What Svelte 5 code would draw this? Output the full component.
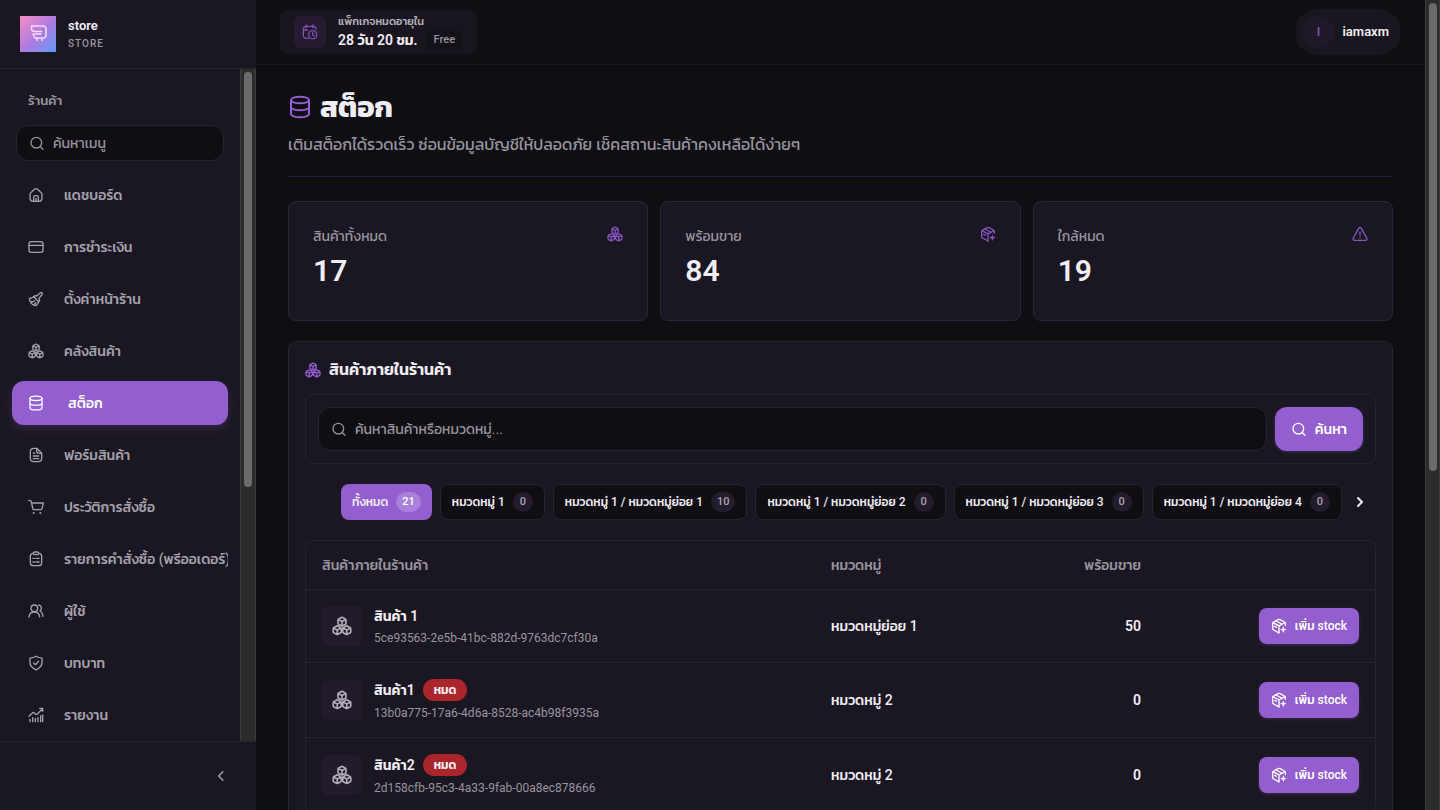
<script lang="ts">
	interface NavItem {
		icon: string;
		label: string;
		active?: boolean;
	}

	const navItems: NavItem[] = [
		{ icon: 'home', label: 'แดชบอร์ด' },
		{ icon: 'card', label: 'การชำระเงิน' },
		{ icon: 'brush', label: 'ตั้งค่าหน้าร้าน' },
		{ icon: 'boxes', label: 'คลังสินค้า' },
		{ icon: 'database', label: 'สต็อก', active: true },
		{ icon: 'file', label: 'ฟอร์มสินค้า' },
		{ icon: 'cart', label: 'ประวัติการสั่งซื้อ' },
		{ icon: 'clipboard', label: 'รายการคำสั่งซื้อ (พรีออเดอร์)' },
		{ icon: 'users', label: 'ผู้ใช้' },
		{ icon: 'shield', label: 'บทบาท' },
		{ icon: 'chart', label: 'รายงาน' }
	];

	const stats = [
		{ label: 'สินค้าทั้งหมด', value: 17, icon: 'boxes' },
		{ label: 'พร้อมขาย', value: 84, icon: 'package' },
		{ label: 'ใกล้หมด', value: 19, icon: 'alert' }
	];

	const categories = [
		{ label: 'ทั้งหมด', count: 21 },
		{ label: 'หมวดหมู่ 1', count: 0 },
		{ label: 'หมวดหมู่ 1 / หมวดหมู่ย่อย 1', count: 10 },
		{ label: 'หมวดหมู่ 1 / หมวดหมู่ย่อย 2', count: 0 },
		{ label: 'หมวดหมู่ 1 / หมวดหมู่ย่อย 3', count: 0 },
		{ label: 'หมวดหมู่ 1 / หมวดหมู่ย่อย 4', count: 0 }
	];

	const products = [
		{ name: 'สินค้า 1', id: '5ce93563-2e5b-41bc-882d-9763dc7cf30a', category: 'หมวดหมู่ย่อย 1', stock: 50 },
		{ name: 'สินค้า1', id: '13b0a775-17a6-4d6a-8528-ac4b98f3935a', category: 'หมวดหมู่ 2', stock: 0 },
		{ name: 'สินค้า2', id: '2d158cfb-95c3-4a33-9fab-00a8ec878666', category: 'หมวดหมู่ 2', stock: 0 }
	];

	let selected = $state(0);
	let menuQuery = $state('');
	let productQuery = $state('');
</script>

{#snippet icon(name: string)}
	<svg class="icon" viewBox="0 0 24 24" aria-hidden="true">
		{#if name === 'home'}
			<path d="M3 11.5c0-1.6.5-2.6 1.8-3.7l4.6-4.2c1.6-1.4 3.6-1.4 5.2 0l4.6 4.2c1.3 1.1 1.8 2.1 1.8 3.7V17c0 3-1.5 4.5-4.5 4.500h-9C4.500 21.500 3 20 3 17z" />
			<path d="M8.500 21v-5.500c0-1.500.8-2.500 2.200-2.500h2.600c1.400 0 2.200 1 2.200 2.500V21M12 17v4" />
		{:else if name === 'card'}
			<rect x="1.500" y="4" width="21" height="16" rx="3.500" />
			<path d="M1.500 9.500h21" />
		{:else if name === 'brush'}
			<path d="M13 7.500 18.500 2.700c1-.8 1.800-.8 2.500 0s.7 1.600 0 2.500L16.500 11c1.500 2 1 3.800-.5 5.200L8.500 8.700C10 7.200 11.500 6.500 13 7.500z" />
			<path d="M8.500 8.700C6.500 10.500 4.500 11 2 11.200c.3 5.500 4.200 10.300 9.800 10.800 2.200-1.500 3.800-3.500 4.200-5.800M5 16c2 .3 3.700-.2 5-1.500M9 20c1.300-.6 2.200-1.500 3-2.600" />
		{:else if name === 'boxes'}
			<path d="m12 1.500 3.800 2c.7.400 1 .8 1 1.500v3.600c0 .7-.3 1.200-1 1.500L12 12l-3.800-1.900c-.7-.3-1-.8-1-1.500V5c0-.7.300-1.100 1-1.500zM7.500 4.300 12 6.600l4.500-2.300M12 6.600V12" />
			<path d="m6.300 11.700 3.800 2c.7.400 1 .8 1 1.500v3.600c0 .7-.3 1.200-1 1.500l-3.800 1.900-3.800-1.900c-.7-.3-1-.8-1-1.500v-3.600c0-.7.300-1.100 1-1.500zM1.800 14.500l4.500 2.300 4.500-2.300M6.300 16.800v5.400" />
			<path d="m17.700 11.700 3.800 2c.7.400 1 .8 1 1.500v3.600c0 .7-.3 1.200-1 1.500l-3.800 1.900-3.800-1.900c-.7-.3-1-.8-1-1.500v-3.600c0-.7.300-1.100 1-1.500zM13.200 14.500l4.500 2.300 4.500-2.300M17.700 16.800v5.400" />
		{:else if name === 'database'}
			<ellipse cx="12" cy="5" rx="9" ry="3.300" />
			<path d="M3 5v7c0 1.800 4 3.300 9 3.300s9-1.500 9-3.300V5M3 12v7c0 1.800 4 3.300 9 3.300s9-1.500 9-3.300v-7" />
		{:else if name === 'file'}
			<path d="M13 2H9C5 2 3.500 3.500 3.500 7v10c0 3.500 1.500 5 5 5h7c3.500 0 5-1.500 5-5V9.500z" />
			<path d="M13 2v4c0 2.500 1 3.500 3.500 3.500h4M8 9h2M8 13.500h8M8 17.500h8" />
		{:else if name === 'cart'}
			<path d="M1 2h1.500c1.200 0 1.900.7 2.200 1.800L7.200 14c.3 1.400 1 2 2.400 2H20M5.500 6H23l-2 8.500c-.3 1-.8 1.500-1.800 1.500H8" />
			<circle class="dot" cx="8.500" cy="21" r="1.500" />
			<circle class="dot" cx="18.500" cy="21" r="1.500" />
		{:else if name === 'clipboard'}
			<path d="M8 3.500C4.700 3.500 3.500 4.800 3.500 8v9.500c0 3.200 1.500 4.500 4.500 4.500h8c3 0 4.500-1.300 4.500-4.500V8c0-3.200-1.200-4.500-4.500-4.500" />
			<rect x="8" y="1.500" width="8" height="4" rx="2" />
			<path d="M7.500 11h2M12 11h4.500M7.500 16.500h2M12 16.500h4.500" />
		{:else if name === 'users'}
			<circle cx="9.500" cy="8" r="5" />
			<path d="M1.500 21c.5-4.600 3.500-7.500 8-7.500s7.500 2.900 8 7.500M16 3c4.500.5 5.500 6.500 2 9 2.600 1.500 4 4.500 4.500 8" />
		{:else if name === 'shield'}
			<path d="M12 1.800c3 1.900 5.600 2.600 9 2.800v7.200c0 5-3.500 8-9 10.400C6.500 19.800 3 16.800 3 11.800V4.600c3.400-.2 6-.9 9-2.800z" />
			<path d="m8.500 12 2.500 2.500 5-5" />
		{:else if name === 'chart'}
			<path d="m1.500 14 5-5c1-1 2-1 3 0l1.500 1.500c1 1 2 1 3 0L22 2.500M17.500 2H22v4.500" />
			<path d="M3 18.500V22M7 16v6M11 17v5M15 16v6M19 13v9M22 12v10" />
		{:else if name === 'package'}
			<path d="M21.500 11V8.200c0-1.100-.5-1.700-1.400-2.200l-6.500-3.500c-1.100-.6-2.100-.6-3.200 0L4 6c-1 .5-1.500 1.100-1.500 2.200v7.600c0 1.100.5 1.700 1.500 2.200l8 4.200" />
			<path d="m3 7 9 4.700L21 7M7.500 4.500l9.200 4.900M12 11.700v10.500M5.500 12.500l2.500 1.300" />
			<path class="dot" d="m18.500 12.500 1.400 3.600 3.600 1.400-3.600 1.400-1.400 3.600-1.400-3.600-3.600-1.400 3.600-1.400z" />
		{:else if name === 'alert'}
			<path d="M10 3.500 2 18c-.9 1.900 0 3.500 2 3.500h16c2 0 2.900-1.600 2-3.500L14 3.500c-1-1.700-3-1.700-4 0zM12 9v5M12 17.500v.2" />
		{:else if name === 'calendar'}
			<path d="M6.500 1.500v4M16.500 1.500v4M10 21.500H7c-3.500 0-5-1.500-5-5V8.500c0-3.500 1.500-5 5-5h9c3.500 0 5 1.500 5 4.500M2 9h6" />
			<circle cx="16" cy="16" r="6" />
			<path d="M16 13v3.300l2 1.200" />
		{:else if name === 'search'}
			<circle cx="11" cy="11.500" r="8" />
			<path d="m17 17.500 4 4" />
		{:else if name === 'left'}
			<path d="m15 5-7 7 7 7" />
		{:else if name === 'right'}
			<path d="m9 6 6 6-6 6" />
		{/if}
	</svg>
{/snippet}

<div class="app">
	<aside class="sidebar">
		<header class="brand">
			<svg class="logo" viewBox="0 0 36 36" aria-hidden="true">
				<defs>
					<linearGradient id="logo-fill" x1="0" y1="0" x2="1" y2="1">
						<stop offset="0" stop-color="#f48fc2" />
						<stop offset="0.5" stop-color="#b37be0" />
						<stop offset="1" stop-color="#5f9bf5" />
					</linearGradient>
				</defs>
				<rect width="36" height="36" fill="url(#logo-fill)" />
				<path class="logo-line" d="M11.500 10h11.500c2 0 3 1 3 3v6c0 2-1 3-3 3h-8l-2-4h8M14 15.500h7.500M11.500 10v2.500c0 1.800.8 2.800 2.500 3M17 22v2.500M22 22v2.500" />
			</svg>
			<div class="brand-text">
				<strong>store</strong>
				<span>STORE</span>
			</div>
		</header>

		<div class="nav-scroll">
			<div class="nav-body">
				<p class="nav-title">ร้านค้า</p>
				<label class="menu-search">
					{@render icon('search')}
					<input type="text" placeholder="ค้นหาเมนู" aria-label="ค้นหาเมนู" bind:value={menuQuery} />
				</label>
				<nav>
					{#each navItems as item}
						<a href="#{item.icon}" class:active={item.active} aria-current={item.active ? 'page' : undefined}>
							{@render icon(item.icon)}
							<span>{item.label}</span>
						</a>
					{/each}
				</nav>
			</div>
			<div class="scrollbar nav-bar" aria-hidden="true"><i></i></div>
		</div>

		<footer class="sidebar-foot">
			<button type="button" aria-label="ย่อเมนู">{@render icon('left')}</button>
		</footer>
	</aside>

	<div class="main">
		<header class="topbar">
			<div class="plan">
				<span class="plan-icon">{@render icon('calendar')}</span>
				<div class="plan-text">
					<span class="plan-label">แพ็กเกจหมดอายุใน</span>
					<div class="plan-row">
						<strong>28 วัน 20 ชม.</strong>
						<span class="plan-tag">Free</span>
					</div>
				</div>
			</div>
			<button type="button" class="account">
				<span class="avatar">I</span>
				iamaxm
			</button>
		</header>

		<main>
			<div class="page-head">
				<h1>{@render icon('database')}สต็อก</h1>
				<p>เติมสต็อกได้รวดเร็ว ซ่อนข้อมูลบัญชีให้ปลอดภัย เช็คสถานะสินค้าคงเหลือได้ง่ายๆ</p>
			</div>

			<section class="stats">
				{#each stats as stat}
					<article class="stat">
						<div>
							<p>{stat.label}</p>
							<strong>{stat.value}</strong>
						</div>
						{@render icon(stat.icon)}
					</article>
				{/each}
			</section>

			<section class="panel">
				<h2>{@render icon('boxes')}สินค้าภายในร้านค้า</h2>

				<form class="search" onsubmit={(e) => e.preventDefault()}>
					<label class="search-field">
						{@render icon('search')}
						<input type="text" placeholder="ค้นหาสินค้าหรือหมวดหมู่..." aria-label="ค้นหาสินค้าหรือหมวดหมู่" bind:value={productQuery} />
					</label>
					<button type="submit" class="primary">{@render icon('search')}ค้นหา</button>
				</form>

				<div class="chips">
					<div class="chip-list">
						{#each categories as category, i}
							<button type="button" class="chip" class:selected={selected === i} onclick={() => (selected = i)}>
								{category.label}
								<span class="count">{category.count}</span>
							</button>
						{/each}
					</div>
					<button type="button" class="next" aria-label="ถัดไป">{@render icon('right')}</button>
				</div>

				<div class="table-wrap">
					<table>
						<thead>
							<tr>
								<th>สินค้าภายในร้านค้า</th>
								<th class="col-category">หมวดหมู่</th>
								<th class="col-stock">พร้อมขาย</th>
								<th class="col-action" aria-label="จัดการ"></th>
							</tr>
						</thead>
						<tbody>
							{#each products as product}
								<tr>
									<td>
										<div class="product">
											<span class="thumb">{@render icon('boxes')}</span>
											<div>
												<div class="name">
													{product.name}
													{#if product.stock === 0}<span class="sold-out">หมด</span>{/if}
												</div>
												<div class="id">{product.id}</div>
											</div>
										</div>
									</td>
									<td>{product.category}</td>
									<td class="col-stock">{product.stock}</td>
									<td class="col-action">
										<button type="button" class="primary small">{@render icon('package')}เพิ่ม stock</button>
									</td>
								</tr>
							{/each}
						</tbody>
					</table>
				</div>
			</section>
		</main>
	</div>

	<div class="scrollbar page-bar" aria-hidden="true"><i></i></div>
</div>

<style>
	:global(body) {
		background: #0f0e13;
	}

	.app {
		--bg: #0f0e13;
		--surface: #1b1722;
		--line: #272330;
		--text: #f0edf5;
		--muted: #98949f;
		--accent: #935fd0;
		display: flex;
		height: 100vh;
		overflow: hidden;
		background: var(--bg);
		color: var(--text);
		font-family: Roboto, Kanit, Prompt, 'Noto Sans Thai', 'Noto Sans', sans-serif;
		font-size: 14px;
		line-height: 20px;
	}

	.app *,
	.app *::before {
		box-sizing: border-box;
	}

	p,
	h1,
	h2 {
		margin: 0;
	}

	button,
	input {
		font: inherit;
		color: inherit;
		border: 0;
		background: none;
		padding: 0;
	}

	button {
		cursor: pointer;
	}

	input {
		flex: 1;
		min-width: 0;
		outline: none;
	}

	input::placeholder {
		color: var(--muted);
		opacity: 1;
	}

	.icon {
		width: 16px;
		height: 16px;
		flex: none;
		fill: none;
		stroke: currentColor;
		stroke-width: 2;
		stroke-linecap: round;
		stroke-linejoin: round;
	}

	.icon .dot {
		fill: currentColor;
		stroke: none;
	}

	/* sidebar */
	.sidebar {
		display: flex;
		flex-direction: column;
		flex: none;
		width: 256px;
		background: var(--surface);
	}

	.brand {
		display: flex;
		align-items: center;
		gap: 12px;
		height: 69px;
		padding: 0 20px;
		border-bottom: 1px solid var(--line);
	}

	.logo {
		width: 36px;
		height: 36px;
	}

	.logo-line {
		fill: none;
		stroke: #f6dcf8;
		stroke-width: 1.5;
		stroke-linecap: round;
		stroke-linejoin: round;
	}

	.brand-text {
		display: flex;
		flex-direction: column;
	}

	.brand-text strong {
		font-size: 13px;
		font-weight: 600;
	}

	.brand-text span {
		color: var(--muted);
		font-size: 10px;
		line-height: 16px;
		font-weight: 500;
		letter-spacing: 1px;
	}

	.nav-scroll {
		display: flex;
		flex: 1;
		min-height: 0;
	}

	.nav-body {
		flex: 1;
		min-width: 0;
		padding: 20px 12px 0;
		overflow: hidden;
	}

	.nav-title {
		padding: 0 16px;
		color: var(--muted);
		font-size: 13px;
		line-height: 24px;
		font-weight: 500;
	}

	.menu-search {
		display: flex;
		align-items: center;
		gap: 8px;
		height: 36px;
		margin: 12px 4px;
		padding: 0 12px;
		border: 1px solid var(--line);
		border-radius: 12px;
		background: var(--bg);
		color: var(--muted);
	}

	nav {
		display: flex;
		flex-direction: column;
		gap: 8px;
	}

	nav a {
		display: flex;
		align-items: center;
		gap: 20px;
		height: 44px;
		flex: none;
		padding-left: 16px;
		overflow: hidden;
		border-radius: 12px;
		color: #a5a1ac;
		font-weight: 500;
		text-decoration: none;
		white-space: nowrap;
	}

	nav a.active {
		gap: 24px;
		background: var(--accent);
		color: #fff;
		box-shadow: 0 4px 8px rgba(147, 95, 208, 0.2);
	}

	.sidebar-foot {
		display: flex;
		align-items: center;
		justify-content: flex-end;
		height: 69px;
		padding-right: 28px;
		border-top: 1px solid var(--line);
		color: var(--muted);
	}

	.sidebar-foot button {
		display: flex;
	}

	.sidebar-foot .icon {
		width: 14px;
		height: 14px;
		stroke-width: 3;
	}

	.scrollbar {
		flex: none;
		padding: 3px 0 0 3px;
		background: #2c2c2c;
		border: solid #3b3b3e;
		border-width: 0 1px;
	}

	.scrollbar i {
		display: block;
		width: 8px;
		border-radius: 4px;
		background: #6b6b6b;
	}

	.nav-bar {
		width: 16px;
	}

	.nav-bar i {
		height: 62%;
	}

	.page-bar {
		width: 15px;
	}

	.page-bar i {
		height: 58%;
	}

	/* top bar */
	.main {
		flex: 1;
		min-width: 0;
	}

	.topbar {
		display: flex;
		align-items: center;
		justify-content: space-between;
		height: 65px;
		padding: 0 24px;
		border-bottom: 1px solid #1a181f;
	}

	.plan {
		display: flex;
		align-items: center;
		gap: 12px;
		height: 44px;
		padding: 0 14px;
		border-radius: 8px;
		background: #19151e;
	}

	.plan-icon {
		display: grid;
		place-items: center;
		width: 32px;
		height: 32px;
		border-radius: 6px;
		background: #261b30;
		color: #804fb5;
	}

	.plan-label {
		display: block;
		color: #b5b1ba;
		font-size: 11px;
		line-height: 16px;
		font-weight: 500;
	}

	.plan-row {
		display: flex;
		align-items: center;
		gap: 8px;
	}

	.plan-row strong {
		font-weight: 600;
		line-height: 20px;
	}

	.plan-tag {
		padding: 0 8px;
		border-radius: 4px;
		background: #131117;
		color: var(--muted);
		font-size: 11px;
		line-height: 18px;
		font-weight: 500;
	}

	.account {
		display: flex;
		align-items: center;
		gap: 8px;
		height: 46px;
		padding: 0 12px 0 7px;
		border-radius: 23px;
		background: #1a161f;
		font-size: 13px;
		font-weight: 600;
	}

	.avatar {
		display: grid;
		place-items: center;
		width: 32px;
		height: 32px;
		border-radius: 16px;
		background: #21182a;
		color: #8250b8;
		font-size: 12px;
	}

	/* page */
	main {
		display: flex;
		flex-direction: column;
		padding: 24px 32px;
	}

	.page-head {
		padding-bottom: 19px;
		border-bottom: 1px solid #25213a;
	}

	h1 {
		display: flex;
		align-items: center;
		gap: 8px;
		font-size: 29px;
		line-height: 36px;
		font-weight: 700;
	}

	h1 .icon {
		width: 24px;
		height: 24px;
		color: var(--accent);
	}

	.page-head p {
		margin-top: 8px;
		color: var(--muted);
		font-size: 16px;
		line-height: 24px;
	}

	.stats {
		display: grid;
		grid-template-columns: repeat(3, 1fr);
		gap: 12px;
		margin: 24px 0 20px;
	}

	.stat {
		display: flex;
		justify-content: space-between;
		padding: 24px;
		border: 1px solid #2a263a;
		border-radius: 8px;
		background: var(--surface);
	}

	.stat p {
		color: var(--muted);
	}

	.stat strong {
		display: block;
		font-size: 30px;
		line-height: 50px;
		font-weight: 600;
	}

	.stat .icon {
		color: #8655bd;
	}

	.panel {
		padding: 16px;
		border: 1px solid var(--line);
		border-radius: 8px;
		background: var(--surface);
	}

	h2 {
		display: flex;
		align-items: center;
		gap: 8px;
		font-size: 16px;
		line-height: 24px;
		font-weight: 600;
	}

	h2 .icon {
		color: var(--accent);
	}

	.search {
		display: flex;
		gap: 8px;
		margin-top: 12px;
		padding: 12px;
		border: 1px solid var(--line);
		border-radius: 8px;
	}

	.search-field {
		display: flex;
		align-items: center;
		flex: 1;
		gap: 8px;
		height: 44px;
		padding: 0 12px;
		border: 1px solid var(--line);
		border-radius: 12px;
		background: var(--bg);
		color: var(--muted);
	}

	.primary {
		display: inline-flex;
		align-items: center;
		gap: 8px;
		padding: 0 16px;
		border-radius: 12px;
		background: var(--accent);
		color: #fff;
		font-weight: 500;
		box-shadow: 0 1px 3px rgba(147, 95, 208, 0.3);
	}

	.primary.small {
		height: 36px;
		padding: 0 12px;
		border-radius: 8px;
		font-size: 12px;
	}

	.chips {
		display: flex;
		align-items: center;
		justify-content: space-between;
		margin: 20px 8px 20px 36px;
	}

	.chip-list {
		display: flex;
		gap: 8px;
		min-width: 0;
		overflow: hidden;
	}

	.chip {
		display: flex;
		align-items: center;
		flex: none;
		gap: 8px;
		height: 36px;
		padding: 0 11px;
		border: 1px solid var(--line);
		border-radius: 8px;
		background: var(--bg);
		font-size: 12px;
		font-weight: 500;
		white-space: nowrap;
	}

	.chip.selected {
		border: 0;
		background: var(--accent);
	}

	.count {
		min-width: 20px;
		padding: 0 6px;
		border-radius: 10px;
		background: #241c2d;
		color: #a9a4b0;
		font-size: 11px;
	}

	.selected .count {
		background: #a981da;
		color: #fff;
	}

	.next {
		display: flex;
	}

	.next .icon {
		stroke-width: 3;
	}

	.table-wrap {
		border: 1px solid var(--line);
		border-radius: 8px;
		overflow: hidden;
	}

	table {
		width: 100%;
		table-layout: fixed;
		border-collapse: collapse;
	}

	th,
	td {
		padding: 16px;
		text-align: left;
		font-weight: 500;
		white-space: nowrap;
	}

	th {
		height: 48px;
		padding: 0 16px;
		color: var(--muted);
	}

	tbody tr {
		border-top: 1px solid var(--line);
	}

	th.col-category,
	th.col-stock {
		width: 16%;
	}

	th.col-action {
		width: 218px;
	}

	.col-stock,
	.col-action {
		text-align: right;
	}

	td.col-action {
		padding-block: 0;
	}

	td.col-stock {
		font-weight: 600;
	}

	.product {
		display: flex;
		align-items: center;
		gap: 12px;
	}

	.thumb {
		display: grid;
		place-items: center;
		width: 40px;
		height: 40px;
		border-radius: 6px;
		background: #231a2b;
		color: #b0acb6;
	}

	.thumb .icon {
		width: 20px;
		height: 20px;
	}

	.name {
		display: flex;
		align-items: center;
		gap: 8px;
		font-weight: 600;
	}

	.id {
		margin-top: 4px;
		color: var(--muted);
		font-size: 12px;
		line-height: 16px;
		font-weight: 400;
	}

	.sold-out {
		padding: 0 11px;
		border-radius: 11px;
		background: #aa262b;
		font-size: 12px;
		line-height: 22px;
	}
</style>
